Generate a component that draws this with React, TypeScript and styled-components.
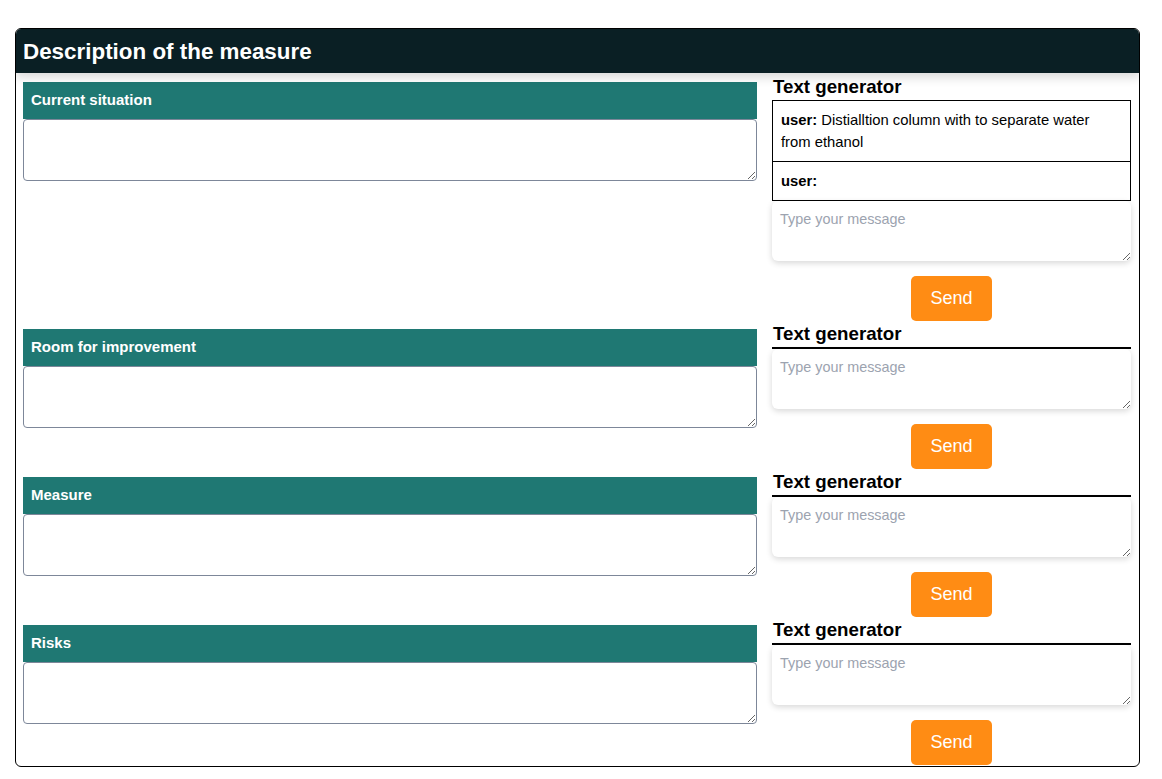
import React from "react";
import styled, { createGlobalStyle } from "styled-components";

const GlobalStyle = createGlobalStyle`
  html, body {
    margin: 0;
    padding: 0;
    background: #ffffff;
    font-family: "Liberation Sans", Arial, sans-serif;
  }
  * { box-sizing: border-box; }
`;

const Page = styled.div`
  padding: 28px 22px 0 15px;
`;

const Card = styled.section`
  width: 1125px;
  height: 739px;
  border: 1px solid #000;
  border-radius: 6px;
  overflow: hidden;
`;

const Header = styled.header`
  height: 45px;
  margin: -1px -1px 0 -1px;
  background: #0a1f24;
  color: #ffffff;
  display: flex;
  align-items: center;
  padding: 3px 8px 0;
  font-size: 22.4px;
  font-weight: 700;
  box-shadow: 0 4px 10px rgba(0, 0, 0, 0.16);
  position: relative;
  z-index: 1;
`;

const Body = styled.div`
  padding: 4px 8px 0 7px;
  display: flex;
  flex-direction: column;
`;

const Row = styled.div`
  display: grid;
  grid-template-columns: 734px 359px;
  column-gap: 15px;
  align-items: start;
`;

const Field = styled.div`
  margin-top: 5px;
  display: flex;
  flex-direction: column;
`;

const Label = styled.div`
  height: 37px;
  background: #1f7873;
  color: #ffffff;
  font-size: 15px;
  font-weight: 700;
  display: flex;
  align-items: center;
  padding: 0 8px 2px;
`;

const FieldInput = styled.textarea`
  display: block;
  width: 100%;
  height: 62px;
  border: 1px solid #7d8799;
  border-radius: 4px;
  font-family: "Liberation Sans", Arial, sans-serif;
  font-size: 14px;
  padding: 6px 8px;
  margin: 0;
`;

const Generator = styled.div`
  display: flex;
  flex-direction: column;
`;

const GenTitle = styled.h3`
  margin: 0;
  font-size: 18.72px;
  line-height: 19px;
  padding: 0 0 4px 1px;
  font-weight: 700;
  color: #000;
`;

const ChatBox = styled.div`
  border: 1px solid #000;
`;

const Message = styled.div`
  padding: 8px 8px;
  font-size: 14.8px;
  line-height: 22px;
  color: #000;
  & + & {
    border-top: 1px solid #000;
  }
  b {
    font-weight: 700;
  }
`;

const ChatInput = styled.textarea`
  display: block;
  width: 100%;
  height: 60px;
  border: none;
  border-radius: 6px;
  box-shadow: 0 2px 6px rgba(0, 0, 0, 0.16);
  font-family: "Liberation Sans", Arial, sans-serif;
  font-size: 14.4px;
  padding: 10px 8px 8px;
  margin: 0;
  outline: none;
  &::placeholder {
    color: #9ca3af;
  }
`;

const SendButton = styled.button`
  align-self: center;
  margin: 15px 0 3px;
  width: 81px;
  height: 45px;
  border: none;
  border-radius: 5px;
  background: #ff8c14;
  color: #ffffff;
  font-family: "Liberation Sans", Arial, sans-serif;
  font-size: 18px;
  cursor: pointer;
`;

type Msg = { role: string; text: string };

const sections: { label: string; messages: Msg[] }[] = [
  {
    label: "Current situation",
    messages: [
      { role: "user", text: "Distialltion column with to separate water from ethanol" },
      { role: "user", text: "" },
    ],
  },
  { label: "Room for improvement", messages: [] },
  { label: "Measure", messages: [] },
  { label: "Risks", messages: [] },
];

export default function App() {
  return (
    <>
      <GlobalStyle />
      <Page>
        <Card>
          <Header>Description of the measure</Header>
          <Body>
            {sections.map((s) => (
              <Row key={s.label}>
                <Field>
                  <Label>{s.label}</Label>
                  <FieldInput />
                </Field>
                <Generator>
                  <GenTitle>Text generator</GenTitle>
                  <ChatBox>
                    {s.messages.map((m, i) => (
                      <Message key={i}>
                        <b>{m.role}:</b> {m.text}
                      </Message>
                    ))}
                  </ChatBox>
                  <ChatInput placeholder="Type your message" />
                  <SendButton>Send</SendButton>
                </Generator>
              </Row>
            ))}
          </Body>
        </Card>
      </Page>
    </>
  );
}
